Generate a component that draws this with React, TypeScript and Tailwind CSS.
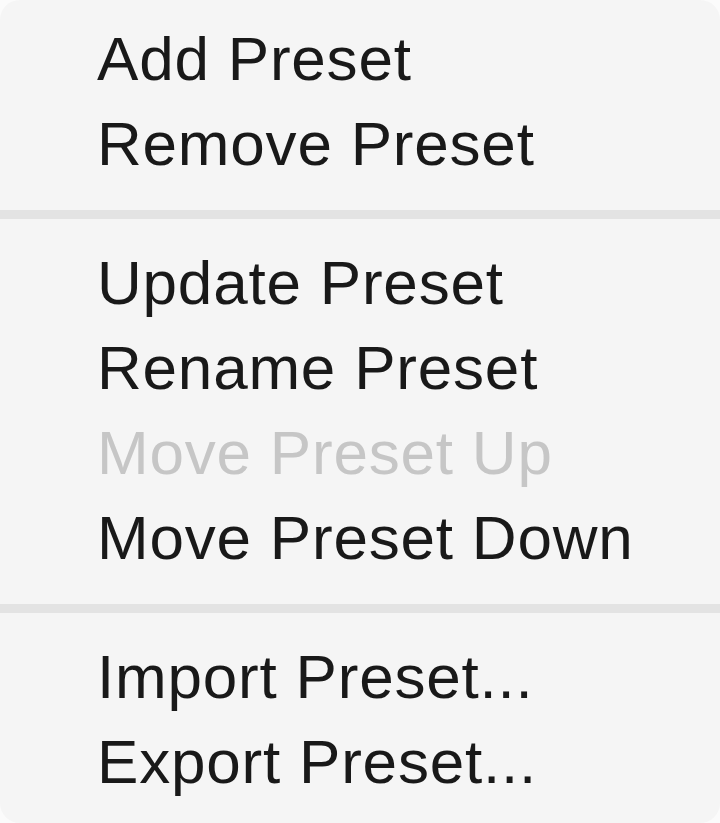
type Item = { label: string; disabled?: boolean } | "separator";

const items: Item[] = [
  { label: "Add Preset" },
  { label: "Remove Preset" },
  "separator",
  { label: "Update Preset" },
  { label: "Rename Preset" },
  { label: "Move Preset Up", disabled: true },
  { label: "Move Preset Down" },
  "separator",
  { label: "Import Preset..." },
  { label: "Export Preset..." },
];

const PresetMenu = () => (
  <div className="flex h-[823px] w-[720px] flex-col rounded-[20px] bg-[#f5f5f5] pt-[16px] font-['Liberation_Sans',Arial,sans-serif] text-[62px] leading-[85px]">
    {items.map((item, i) =>
      item === "separator" ? (
        <div key={i} className="pt-[24px] pb-[21px]">
          <div className="h-[9px] bg-[#e3e3e3]" />
        </div>
      ) : (
        <div
          key={item.label}
          className={`pl-[97px] tracking-[0.8px] ${item.disabled ? "text-[#c6c6c6]" : "text-[#191919]"}`}
        >
          {item.label}
        </div>
      )
    )}
  </div>
);

const App = () => (
  <div className="min-h-screen bg-[#fbfbfb]">
    <PresetMenu />
  </div>
);

export default App;
